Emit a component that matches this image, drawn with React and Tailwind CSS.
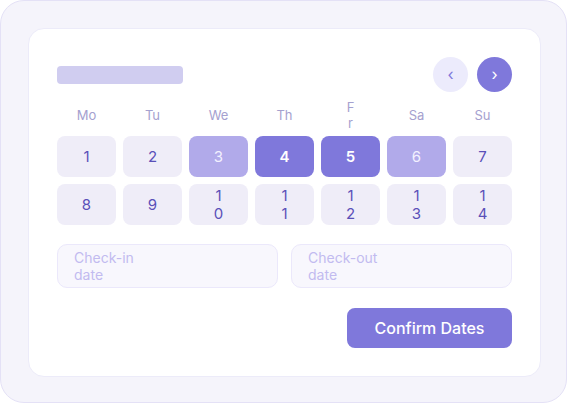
import React from "react";

const days = [
  { n: "1", t: "normal" },
  { n: "2", t: "normal" },
  { n: "3", t: "light" },
  { n: "4", t: "dark" },
  { n: "5", t: "dark" },
  { n: "6", t: "light" },
  { n: "7", t: "normal" },
  { n: "8", t: "normal" },
  { n: "9", t: "normal" },
  { n: "10", t: "normal" },
  { n: "11", t: "normal" },
  { n: "12", t: "normal" },
  { n: "13", t: "normal" },
  { n: "14", t: "normal" },
];

const labels = ["Mo", "Tu", "We", "Th", "Fr", "Sa", "Su"];

function cellClass(t) {
  if (t === "dark") return "bg-[#7f78db] text-white font-semibold";
  if (t === "light") return "bg-[#b1aaea] text-[#f3f1ff]";
  return "bg-[#efedf8] text-[#5a50b8]";
}

export default function App() {
  return (
    <div
      className="w-[567px] h-[403px] rounded-[24px] border border-[#e4e1f6] bg-[#f5f4fb] pt-[27px] pl-[27px]"
      style={{ fontFamily: "Inter, 'Noto Sans', sans-serif" }}
    >
      <div className="w-[513px] h-[349px] rounded-[16px] border border-[#ecebf9] bg-white p-[28px] flex flex-col">
        <div className="flex items-center justify-between h-[35px]">
          <div className="w-[126px] h-[18px] rounded-[4px] bg-[#d0cdf0]" />
          <div className="flex gap-[9px]">
            <div className="w-[35px] h-[35px] rounded-full bg-[#ecebfc] text-[#7f78db] flex items-center justify-center text-[16px] leading-none pb-[2px]">
              ‹
            </div>
            <div className="w-[35px] h-[35px] rounded-full bg-[#7f78db] text-white flex items-center justify-center text-[16px] leading-none pb-[2px]">
              ›
            </div>
          </div>
        </div>

        <div className="mt-[8px] grid grid-cols-[repeat(7,59px)] gap-x-[7px] items-center text-center text-[13px] leading-[15.7px] text-[#a5a1cf]">
          {labels.map((l) => (
            <div key={l} className="flex flex-col items-center">
              {l === "Fr" ? (
                <>
                  <span>F</span>
                  <span>r</span>
                </>
              ) : (
                <span>{l}</span>
              )}
            </div>
          ))}
        </div>

        <div className="mt-[5px] grid grid-cols-[repeat(7,59px)] auto-rows-[41px] gap-[7px] text-[15px] leading-[17.6px]">
          {days.map((d) => (
            <div
              key={d.n}
              className={`rounded-[8px] flex flex-col items-center justify-center ${cellClass(d.t)}`}
            >
              {d.n.split("").map((c, i) => (
                <span key={i}>{c}</span>
              ))}
            </div>
          ))}
        </div>

        <div className="mt-[19px] flex gap-[13px]">
          {[
            ["Check-in", "date"],
            ["Check-out", "date"],
          ].map((p) => (
            <div
              key={p[0]}
              className="w-[221px] h-[44px] rounded-[10px] border border-[#ebe8fb] bg-[#f8f7fd] px-[16px] flex flex-col justify-center text-[14px] leading-[17px] text-[#c2bbf0]"
            >
              <span>{p[0]}</span>
              <span>{p[1]}</span>
            </div>
          ))}
        </div>

        <div className="mt-[20px] flex justify-end">
          <div className="w-[165px] h-[40px] rounded-[8px] bg-[#7f78db] text-white text-[16px] font-medium flex items-center justify-center">
            Confirm Dates
          </div>
        </div>
      </div>
    </div>
  );
}
